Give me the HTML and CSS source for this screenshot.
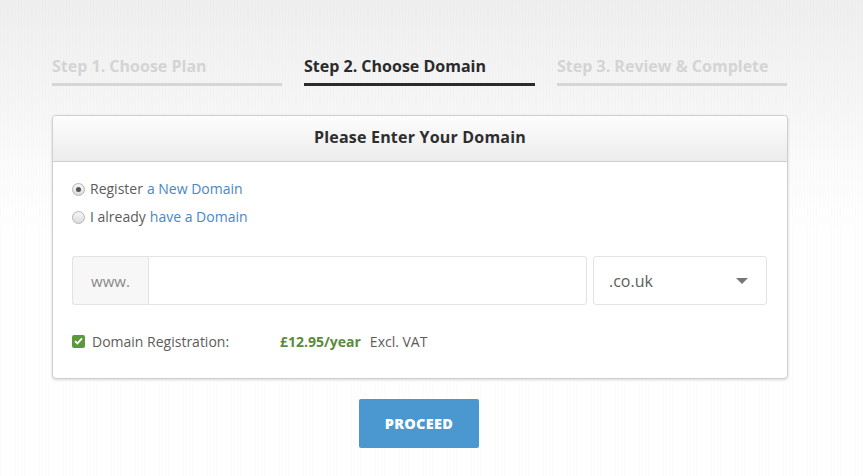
FILE: index.html
```html
<!DOCTYPE html>
<html>
<head>
<meta charset="utf-8">
<link rel="stylesheet" href="styles.css">
</head>
<body>
<div class="page">
  <div class="wrap">
    <div class="steps">
      <div class="step">Step 1. Choose Plan</div>
      <div class="step active">Step 2. Choose Domain</div>
      <div class="step">Step 3. Review &amp; Complete</div>
    </div>
    <div class="panel">
      <div class="panel-head">Please Enter Your Domain</div>
      <div class="panel-body">
        <div class="opt"><span class="radio checked"></span>Register <a class="link">a New Domain</a></div>
        <div class="opt second"><span class="radio"></span>I already <a class="link">have a Domain</a></div>
        <div class="group">
          <div class="addon">www.</div>
          <div class="field"></div>
          <div class="select"><span>.co.uk</span><span class="caret"></span></div>
        </div>
        <div class="reg">
          <span class="check"><svg width="9" height="8" viewBox="0 0 9 8"><path d="M1 4.2 L3.4 6.4 L8 1.4" fill="none" stroke="#fff" stroke-width="1.8"/></svg></span>
          <span class="reg-label">Domain Registration:</span>
          <span class="price">£12.95/year</span>
          <span class="vat">Excl. VAT</span>
        </div>
      </div>
    </div>
    <div class="actions"><button class="btn">PROCEED</button></div>
  </div>
</div>
</body>
</html>
```
FILE: styles.css
```css
html, body { margin: 0; padding: 0; }
body {
  font-family: "Open Sans", "Liberation Sans", sans-serif;
  background: #fff;
  width: 863px;
  height: 476px;
  overflow: hidden;
}
.page {
  height: 476px;
  background:
    repeating-linear-gradient(90deg, rgba(0,0,0,0.012) 0 1px, rgba(255,255,255,0) 1px 3px),
    linear-gradient(180deg, #efefef 0px, #f5f5f5 90px, #fbfbfb 160px, #ffffff 230px);
  padding-left: 52px;
  padding-top: 55px;
  box-sizing: border-box;
}
.wrap { width: 736px; }
.steps {
  display: grid;
  grid-template-columns: 230px 231px 230px;
  column-gap: 22px;
}
.step {
  font-size: 16px;
  font-weight: 700;
  line-height: 22px;
  color: #d4d4d4;
  padding-bottom: 6px;
  border-bottom: 3px solid #d6d6d6;
}
.step.active { color: #2b2b2b; border-bottom-color: #2b2b2b; }
.panel {
  margin-top: 29px;
  border: 1px solid #cfcfcf;
  border-radius: 4px;
  background: #fff;
  box-shadow: 0 1px 3px rgba(0,0,0,0.15);
}
.panel-head {
  height: 45px;
  line-height: 43px;
  text-align: center;
  font-size: 16px;
  font-weight: 700;
  letter-spacing: 0.2px;
  color: #2e2e2e;
  background: linear-gradient(180deg, #fdfdfd, #ececec);
  border-bottom: 1px solid #cfcfcf;
  border-radius: 4px 4px 0 0;
}
.panel-body { padding: 17px 20px 27px 19px; }
.opt {
  display: flex;
  align-items: center;
  font-size: 14px;
  line-height: 20px;
  color: #5c5c5c;
}
.opt.second { margin-top: 8px; }
.link { color: #4a86c8; margin-left: 4px; }
.radio {
  width: 11px;
  height: 11px;
  border-radius: 50%;
  border: 1px solid #b5b5b5;
  background: linear-gradient(180deg, #f6f6f6, #dcdcdc);
  margin-right: 5px;
  position: relative;
  box-sizing: content-box;
}
.radio.checked::after {
  content: "";
  position: absolute;
  left: 3px; top: 3px;
  width: 5px; height: 5px;
  border-radius: 50%;
  background: #555;
}
.group {
  display: flex;
  margin-top: 29px;
  height: 49px;
}
.addon {
  width: 75px;
  border: 1px solid #e3e3e3;
  border-right: none;
  border-radius: 3px 0 0 3px;
  background: #f7f7f7;
  color: #888;
  font-size: 15px;
  display: flex;
  align-items: center;
  justify-content: center;
}
.field {
  width: 437px;
  border: 1px solid #e3e3e3;
  border-radius: 0 3px 3px 0;
  background: #fff;
}
.select {
  margin-left: 6px;
  width: 174px;
  border: 1px solid #e3e3e3;
  border-radius: 3px;
  display: flex;
  align-items: center;
  justify-content: space-between;
  padding: 0 18px 0 15px;
  box-sizing: border-box;
  font-size: 16px;
  color: #5c5c5c;
}
.caret {
  width: 0; height: 0;
  border-left: 6px solid transparent;
  border-right: 6px solid transparent;
  border-top: 6px solid #777;
}
.reg {
  display: flex;
  align-items: center;
  margin-top: 26px;
  height: 20px;
  font-size: 14px;
  color: #5c5c5c;
}
.check {
  width: 13px; height: 13px;
  border-radius: 2px;
  background: #5a9a3a;
  display: flex;
  align-items: center;
  justify-content: center;
  margin-right: 7px;
}
.reg-label { width: 188px; }
.price { color: #5b8b3b; font-weight: 700; margin-right: 9px; }
.actions {
  display: flex;
  justify-content: center;
  margin-top: 20px;
}
.btn {
  width: 120px;
  height: 49px;
  border: none;
  border-radius: 2px;
  background: #4b98d0;
  color: #fff;
  font-family: "Open Sans", "Liberation Sans", sans-serif;
  font-weight: 800;
  font-size: 14.5px;
  letter-spacing: 0.3px;
  margin-right: 2px;
}
```
